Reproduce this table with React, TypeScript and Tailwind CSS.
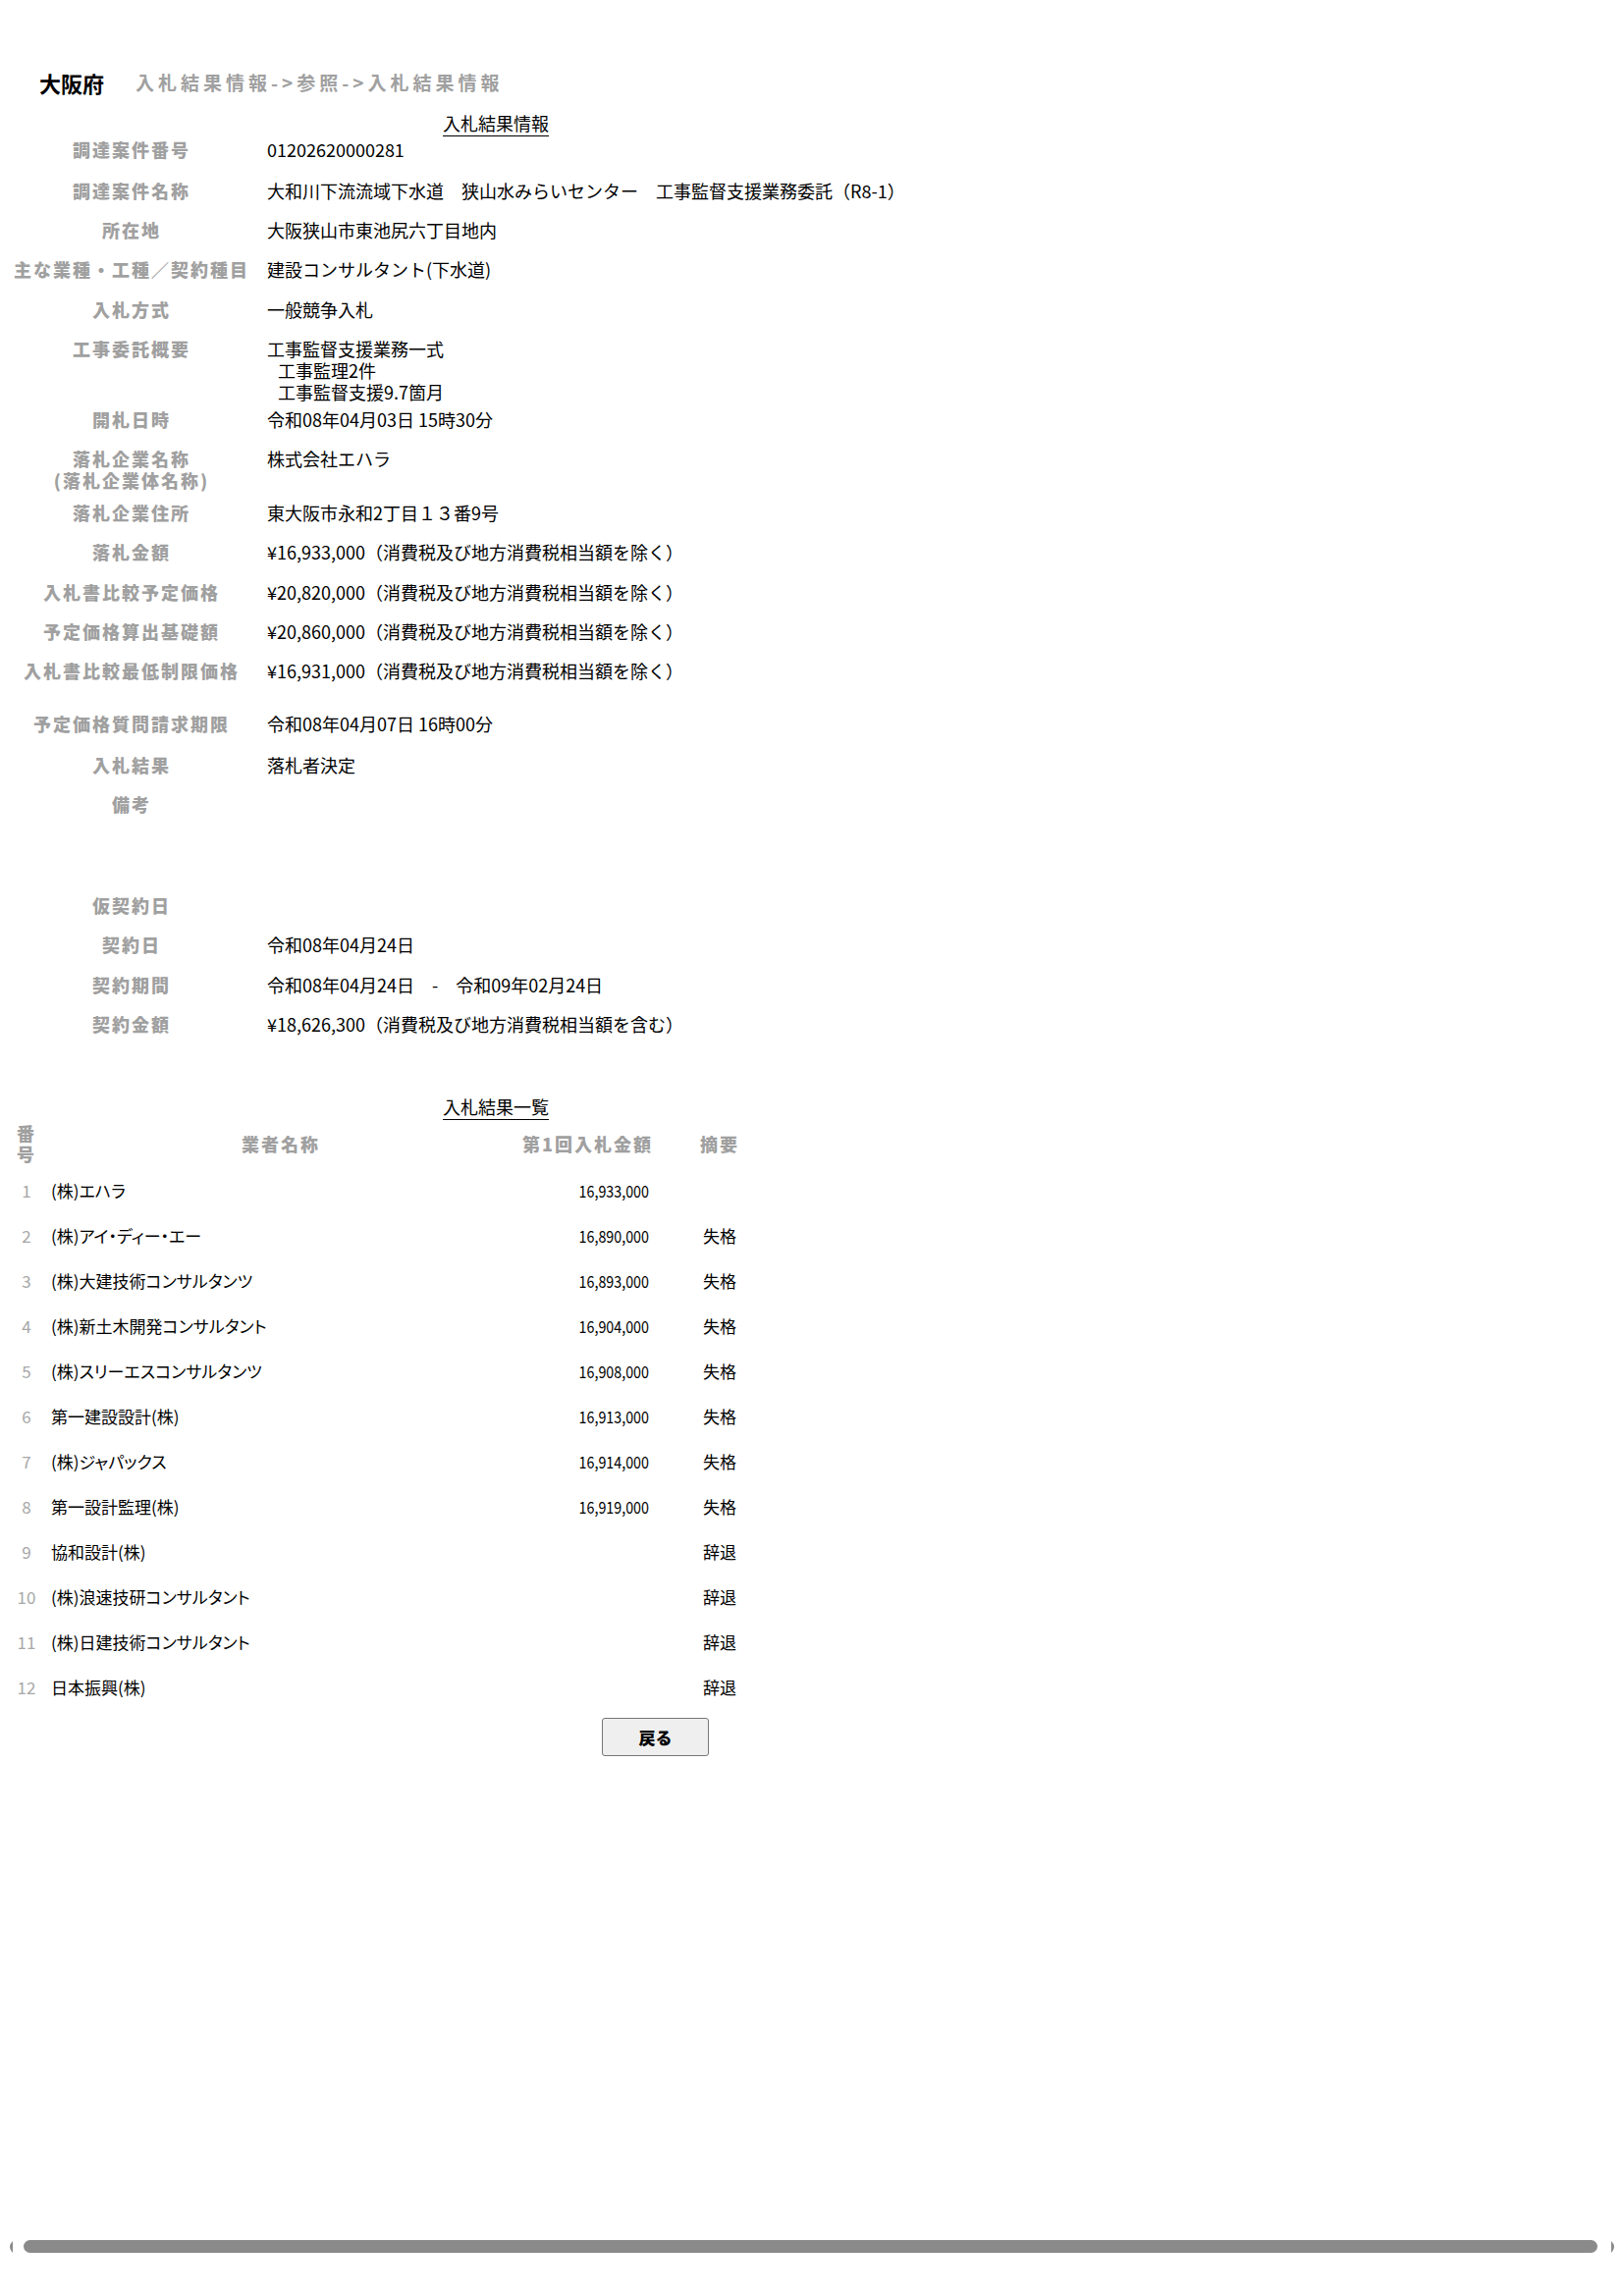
import React from 'react'

interface InfoRow {
  label: string[];
  value: string[];
  h: string;
  indent?: boolean;
}

interface Bidder {
  no: number;
  name: string;
  amount: string;
  note: string;
}

const infoRows: InfoRow[] = [
  { label: ['調達案件番号'], value: ['01202620000281'], h: 'h-[42px]' },
  { label: ['調達案件名称'], value: ['大和川下流流域下水道　狭山水みらいセンター　工事監督支援業務委託（R8-1）'], h: 'h-[40px]' },
  { label: ['所在地'], value: ['大阪狭山市東池尻六丁目地内'], h: 'h-[40px]' },
  { label: ['主な業種・工種／契約種目'], value: ['建設コンサルタント(下水道)'], h: 'h-[41px]' },
  { label: ['入札方式'], value: ['一般競争入札'], h: 'h-[40px]' },
  { label: ['工事委託概要'], value: ['工事監督支援業務一式', '工事監理2件', '工事監督支援9.7箇月'], h: 'h-[72px]', indent: true },
  { label: ['開札日時'], value: ['令和08年04月03日 15時30分'], h: 'h-[40px]' },
  { label: ['落札企業名称', '(落札企業体名称)'], value: ['株式会社エハラ'], h: 'h-[55px]' },
  { label: ['落札企業住所'], value: ['東大阪市永和2丁目１３番9号'], h: 'h-[40px]' },
  { label: ['落札金額'], value: ['¥16,933,000（消費税及び地方消費税相当額を除く）'], h: 'h-[41px]' },
  { label: ['入札書比較予定価格'], value: ['¥20,820,000（消費税及び地方消費税相当額を除く）'], h: 'h-[40px]' },
  { label: ['予定価格算出基礎額'], value: ['¥20,860,000（消費税及び地方消費税相当額を除く）'], h: 'h-[40px]' },
  { label: ['入札書比較最低制限価格'], value: ['¥16,931,000（消費税及び地方消費税相当額を除く）'], h: 'h-[54px]' },
  { label: ['予定価格質問請求期限'], value: ['令和08年04月07日 16時00分'], h: 'h-[42px]' },
  { label: ['入札結果'], value: ['落札者決定'], h: 'h-[40px]' },
  { label: ['備考'], value: [], h: 'h-[103px]' },
  { label: ['仮契約日'], value: [], h: 'h-[40px]' },
  { label: ['契約日'], value: ['令和08年04月24日'], h: 'h-[41px]' },
  { label: ['契約期間'], value: ['令和08年04月24日　-　令和09年02月24日'], h: 'h-[40px]' },
  { label: ['契約金額'], value: ['¥18,626,300（消費税及び地方消費税相当額を含む）'], h: 'h-[40px]' },
]

const bidders: Bidder[] = [
  { no: 1, name: '(株)エハラ', amount: '16,933,000', note: '' },
  { no: 2, name: '(株)アイ・ディー・エー', amount: '16,890,000', note: '失格' },
  { no: 3, name: '(株)大建技術コンサルタンツ', amount: '16,893,000', note: '失格' },
  { no: 4, name: '(株)新土木開発コンサルタント', amount: '16,904,000', note: '失格' },
  { no: 5, name: '(株)スリーエスコンサルタンツ', amount: '16,908,000', note: '失格' },
  { no: 6, name: '第一建設設計(株)', amount: '16,913,000', note: '失格' },
  { no: 7, name: '(株)ジャパックス', amount: '16,914,000', note: '失格' },
  { no: 8, name: '第一設計監理(株)', amount: '16,919,000', note: '失格' },
  { no: 9, name: '協和設計(株)', amount: '', note: '辞退' },
  { no: 10, name: '(株)浪速技研コンサルタント', amount: '', note: '辞退' },
  { no: 11, name: '(株)日建技術コンサルタント', amount: '', note: '辞退' },
  { no: 12, name: '日本振興(株)', amount: '', note: '辞退' },
]

export default function App() {
  return (
    <div className="flex min-h-[2339px] w-full flex-col bg-white font-['Noto_Sans_CJK_JP',sans-serif] text-black">
      {/* Header */}
      <div className="mt-[70px] flex h-[28px] items-center pl-[40px] leading-[28px]">
        <span className="text-[22px] font-bold">大阪府</span>
        <span className="ml-[32px] text-[19px] font-bold tracking-[4px] text-[#a0a0a0]">入札結果情報-&gt;参照-&gt;入札結果情報</span>
      </div>

      {/* Detail */}
      <div className="mt-[20px] h-[14px] w-[1010px] text-center text-[18px] leading-[14px] underline underline-offset-[5px]">
        入札結果情報
      </div>
      <div className="flex flex-col pl-[14px]">
        {infoRows.map((row, i) => (
          <div key={i} className={`flex ${row.h}`}>
            <div className="w-[240px] shrink-0 pt-[9px] text-center text-[18px] font-black leading-[22px] tracking-[2px] text-[#a0a0a0]">
              {row.label.map((l, j) => (
                <div key={j}>{l}</div>
              ))}
            </div>
            <div className="pl-[18px] pt-[9px] text-[18px] leading-[22px] whitespace-pre">
              {row.value.map((v, j) => (
                <div key={j} className={row.indent && j > 0 ? 'pl-[11px]' : ''}>{v}</div>
              ))}
            </div>
          </div>
        ))}
      </div>

      {/* Bid list */}
      <div className="mt-[56px] h-[16px] w-[1010px] text-center text-[18px] leading-[16px] underline underline-offset-[5px]">
        入札結果一覧
      </div>
      <div className="mt-[5px] flex flex-col pl-[14px]">
        <div className="flex h-[50px] items-center text-[18px] font-black tracking-[2px] text-[#a0a0a0]">
          <div className="w-[26px] shrink-0 text-center leading-[21px]">番号</div>
          <div className="w-[492px] shrink-0 text-center">業者名称</div>
          <div className="w-[131px] shrink-0 whitespace-nowrap text-right">第1回入札金額</div>
          <div className="w-[140px] shrink-0 text-center">摘要</div>
        </div>
        {bidders.map((b) => (
          <div key={b.no} className="flex h-[46px] items-center">
            <div className="w-[26px] shrink-0 text-center text-[17px] text-[#a8a8a8]">{b.no}</div>
            <div className="w-[492px] shrink-0 pl-[12px] text-[17px] [font-feature-settings:'palt']">{b.name}</div>
            <div className="flex w-[131px] shrink-0 justify-end pr-[2px]">
              <span className="inline-block origin-right scale-x-[0.84] text-[17px]">{b.amount}</span>
            </div>
            <div className="w-[140px] shrink-0 text-center text-[17px]">{b.note}</div>
          </div>
        ))}
      </div>
      <div className="mt-[8px] pl-[613px]">
        <button className="flex h-[39px] w-[109px] items-center justify-center rounded-[3px] border border-[#767676] bg-[#efefef] text-[17px] font-black">
          戻る
        </button>
      </div>

      {/* Horizontal scrollbar */}
      <div className="mt-auto mb-[44px] flex h-[13px] items-center pl-[7px] pr-[6px]">
        <svg width="6" height="12" viewBox="0 0 6 12">
          <path d="M6 0 Q0 6 6 12 Z" fill="#8a8a8a" />
        </svg>
        <div className="ml-[11px] h-[13px] flex-1 rounded-full bg-[#8a8a8a]" />
        <svg className="ml-[14px]" width="6" height="12" viewBox="0 0 6 12">
          <path d="M0 0 Q6 6 0 12 Z" fill="#8a8a8a" />
        </svg>
      </div>
    </div>
  )
}
